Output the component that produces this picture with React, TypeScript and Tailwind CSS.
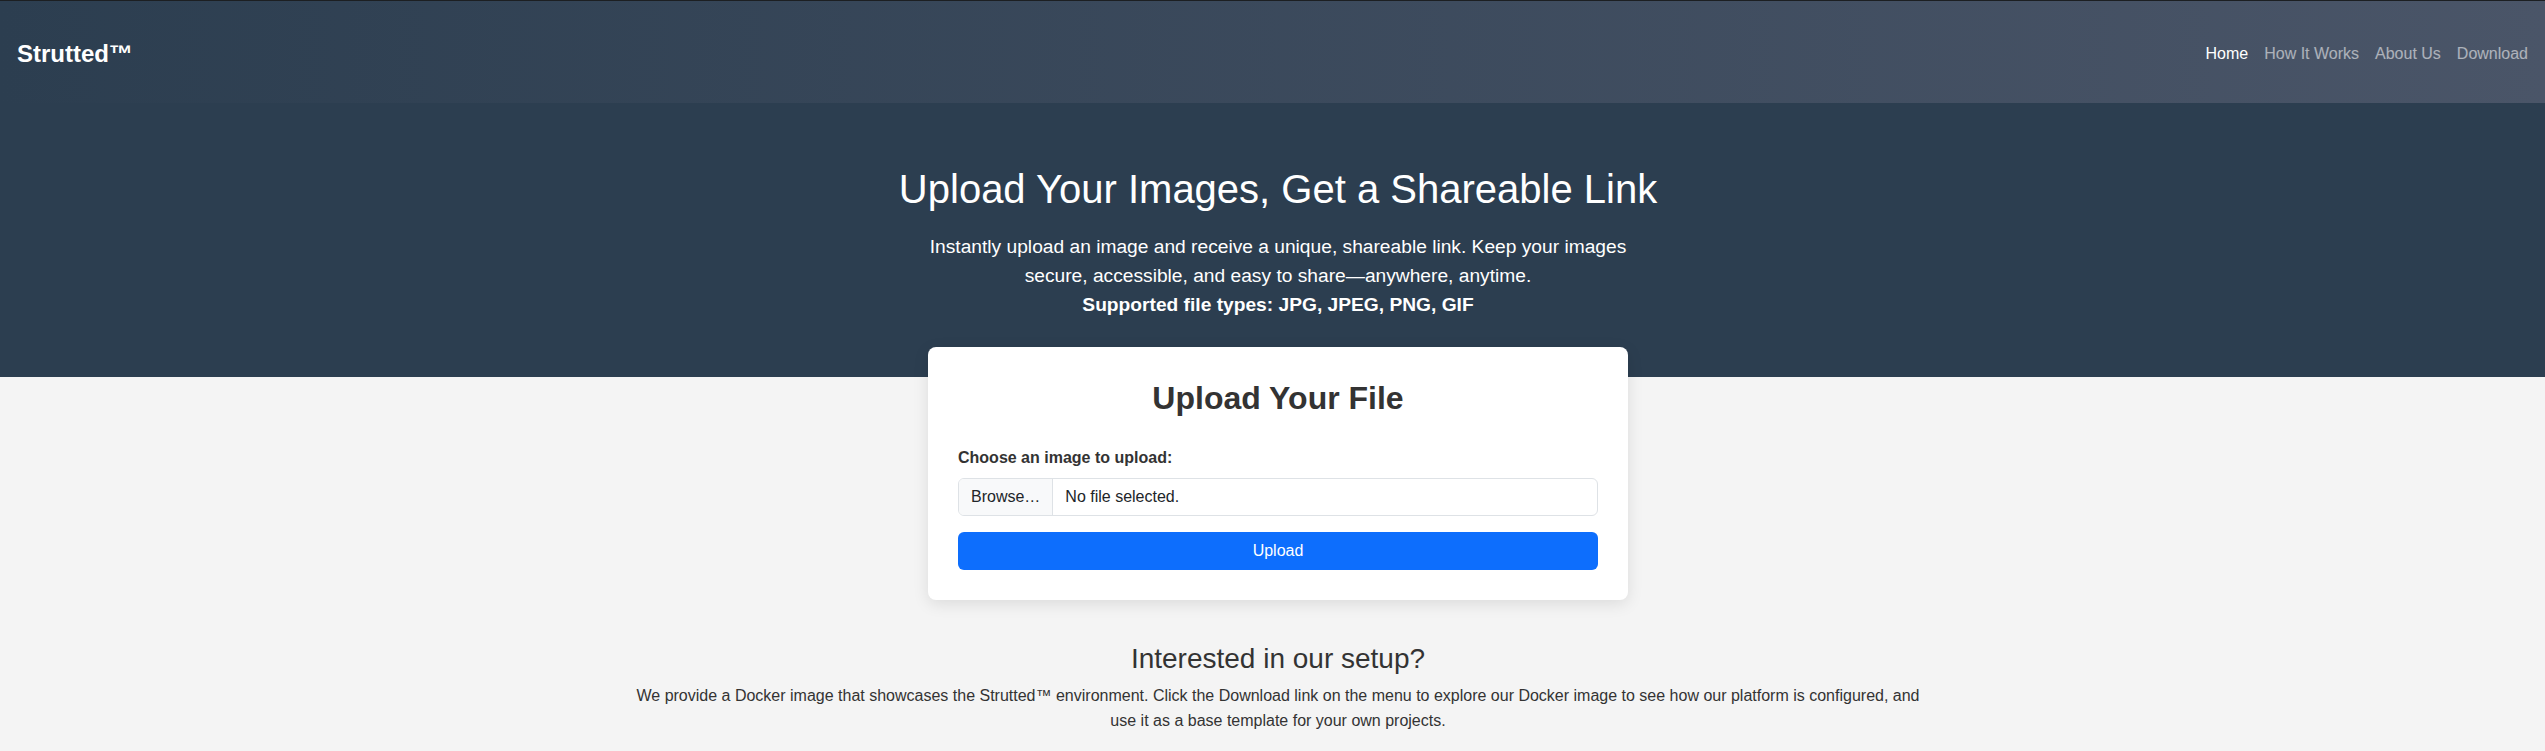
const links = [
  { label: 'Home', active: true },
  { label: 'How It Works', active: false },
  { label: 'About Us', active: false },
  { label: 'Download', active: false },
];

export default function App() {
  return (
    <div className="min-h-screen bg-[#f4f4f4] font-['Liberation_Sans',Arial,sans-serif] text-[#333]">
      <nav className="h-[103px] border-t border-[#1c1f22] bg-linear-to-r from-[#2c3e50] to-[#4a5568] flex items-center justify-between pt-[3px] pl-[17px] pr-[9px]">
        <a href="#" className="text-2xl font-bold text-white">Strutted™</a>
        <ul className="flex items-center">
          {links.map((link) => (
            <li key={link.label}>
              <a
                href="#"
                className={`px-2 text-base leading-6 ${link.active ? 'text-white' : 'text-white/55'}`}
              >
                {link.label}
              </a>
            </li>
          ))}
        </ul>
      </nav>

      <header className="bg-[#2c3e50] text-white text-center pt-[62px] pb-[58px]">
        <div className="pl-[11px]">
          <h1 className="text-[40px] leading-[1.2] font-normal mb-5">Upload Your Images, Get a Shareable Link</h1>
          <p className="text-[19.2px] leading-[1.5] max-w-[700px] mx-auto">
            Instantly upload an image and receive a unique, shareable link. Keep your images secure, accessible, and easy
            to share—anywhere, anytime.
            <br />
            <strong>Supported file types: JPG, JPEG, PNG, GIF</strong>
          </p>
        </div>
      </header>

      <main className="pl-[11px] pb-10">
        <div className="relative w-[700px] mx-auto -mt-[30px] bg-white rounded-lg px-[30px] pt-[32px] pb-[30px] shadow-[0_4px_16px_rgba(0,0,0,0.1)]">
          <h2 className="text-[32px] leading-[1.2] font-bold text-center mb-[28px]">Upload Your File</h2>
          <form>
            <label className="block text-base leading-6 font-bold mb-2">Choose an image to upload:</label>
            <div className="flex h-[38px] border border-[#dee2e6] rounded-md overflow-hidden text-base text-[#212529]">
              <span className="flex items-center px-3 bg-[#f8f9fa] border-r border-[#dee2e6]">Browse…</span>
              <span className="flex items-center px-3">No file selected.</span>
            </div>
            <button
              type="button"
              className="mt-4 w-full h-[38px] rounded-md bg-[#0d6efd] text-white text-base"
            >
              Upload
            </button>
          </form>
        </div>

        <section className="mt-[42px] max-w-[1320px] mx-auto px-3 text-center">
          <h3 className="text-[28px] leading-[1.2] font-normal mb-[9px]">Interested in our setup?</h3>
          <p className="text-base leading-[1.55]">
            We provide a Docker image that showcases the Strutted™ environment. Click the Download link on the menu to
            explore our Docker image to see how our platform is configured, and use it as a base template for your own
            projects.
          </p>
        </section>
      </main>
    </div>
  );
}
